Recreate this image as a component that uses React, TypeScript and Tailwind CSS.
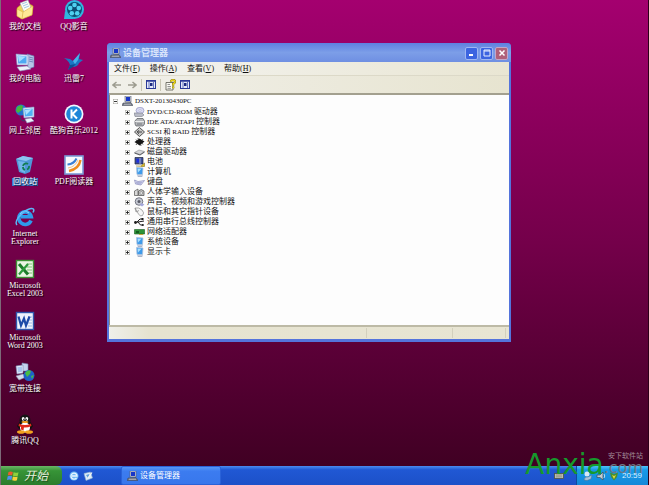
import React, { useState } from 'react';
import clsx from 'clsx';

type IconProps = { className?: string };

/* ---------- desktop icons ---------- */

const DocumentsIcon = () => (
  <svg viewBox="0 0 20 20" className="h-5 w-5">
    <path d="M2 8 L10 1 L18 6 L17 15 L7 19 L2 16 Z" fill="#f3cf5b" stroke="#b98a1c" strokeWidth=".6" />
    <path d="M5 3 L13 0 L16 8 L9 12 Z" fill="#fdfdf4" stroke="#9aa7b8" strokeWidth=".5" />
    <path d="M7 4 L12 2 M8 6 L13 4 M9 8 L14 6" stroke="#8bb9e6" strokeWidth=".8" />
    <path d="M2 9 L8 12 L18 6 L17 15 L7 19 L2 16 Z" fill="#ffe896" stroke="#d6a93a" strokeWidth=".5" />
    <path d="M8 12 L7 19" stroke="#dcb04a" strokeWidth=".7" />
  </svg>
);

const ComputerIcon = () => (
  <svg viewBox="0 0 20 20" className="h-5 w-5">
    <path d="M12 2 L19 4 V15 L13 17 Z" fill="#b7c5e8" stroke="#6377ad" strokeWidth=".6" />
    <path d="M14 5 L18 6 M14 7 L18 8 M14 9 L18 10" stroke="#5069a8" strokeWidth=".7" />
    <path d="M1 2 L13 3 V13 L2 13 Z" fill="#dfe8fa" stroke="#7a90c4" strokeWidth=".6" />
    <path d="M2.500 3.500 L11.500 4.300 V11.500 L3.200 11.600 Z" fill="#4fa9f2" />
    <path d="M3 4 L11 4.500 L4 10 Z" fill="#a6dcff" />
    <path d="M2 15 L12 14 L16 17 L5 19 Z" fill="#edf1fb" stroke="#8a9ac0" strokeWidth=".6" />
  </svg>
);

const NetworkIcon = () => (
  <svg viewBox="0 0 20 20" className="h-5 w-5">
    <circle cx="6" cy="6" r="5.500" fill="#2272cf" />
    <path d="M2 3 Q6 0 8 2 L7 6 L3 9 L1 7 Z M8 8 L11 7 L9 11 Z" fill="#46b83c" />
    <path d="M8 4 L19 3 V13 L9 14 Z" fill="#dce8fb" stroke="#7c93c8" strokeWidth=".6" />
    <path d="M9.300 5.300 L17.700 4.500 V11.700 L10 12.500 Z" fill="#4fb0f4" />
    <path d="M10 6 L17 5 L11 11 Z" fill="#aee2ff" />
    <path d="M10 15 L16 14 L19 17 L12 19 Z" fill="#edf1fb" stroke="#8a9ac0" strokeWidth=".6" />
    <path d="M5 12 Q5 17 10 17" fill="none" stroke="#33406b" strokeWidth="1" />
  </svg>
);

const RecycleIcon = () => (
  <svg viewBox="0 0 20 20" className="h-5 w-5">
    <path d="M1 4 L8 1 L18 3 L15 17 L10 19 L4 17 Z" fill="#4f97d8" />
    <path d="M1 4 L8 1 L18 3 L11 6 Z" fill="#8cc6f1" />
    <path d="M3 6 L10 7 L10 18 L5 16 Z" fill="#74b5ea" />
    <path d="M8 11 A3.200 3.200 0 0 1 13 9 M14 11 A3.200 3.200 0 0 1 12 14.500 M10 15 A3 3 0 0 1 8 12" fill="none" stroke="#127d53" strokeWidth="1.800" />
  </svg>
);

const ExplorerIcon = () => (
  <svg viewBox="0 0 20 20" className="h-5 w-5">
    <path d="M16 13.500 A6.300 6.300 0 1 1 16.300 9.800 H6" fill="none" stroke="#2f9bea" strokeWidth="3.600" />
    <path d="M5 7 A6 6 0 0 1 14 6" fill="none" stroke="#8fd4ff" strokeWidth="1" />
    <path d="M2 18 C-1 15 5 6 13 2.500 C18 .5 20 2 18 5.500" fill="none" stroke="#5cb8f7" strokeWidth="1.500" />
  </svg>
);

const ExcelIcon = () => (
  <svg viewBox="0 0 20 20" className="h-5 w-5">
    <rect x="1.500" y="1.500" width="17" height="17" fill="#e9f6e4" stroke="#3d8f35" strokeWidth="1.400" />
    <path d="M12 5 H17 M12 8 H17 M12 11 H17 M12 14 H17" stroke="#7fbf74" strokeWidth="1" />
    <path d="M4 5 L13 15.500" stroke="#1c7d2a" strokeWidth="3" />
    <path d="M13 5 L4 15.500" stroke="#2c9a3c" strokeWidth="2.200" />
  </svg>
);

const WordIcon = () => (
  <svg viewBox="0 0 20 20" className="h-5 w-5">
    <rect x="1.500" y="1.500" width="17" height="17" fill="#eef3fd" stroke="#2f57ad" strokeWidth="1.400" />
    <path d="M13 6 H17 M13 9 H17 M13 12 H17 M13 15 H17" stroke="#9db7e4" strokeWidth="1" />
    <path d="M3.500 5.500 L6 14.500 L9 7.500 L11 14.500 L14.500 5.500" fill="none" stroke="#1d4ba8" strokeWidth="2.200" />
  </svg>
);

const BroadbandIcon = () => (
  <svg viewBox="0 0 20 20" className="h-5 w-5">
    <path d="M7 1 L13 2 V9 L7 9 Z" fill="#c5d3ee" stroke="#7688b5" strokeWidth=".6" />
    <path d="M1 4 L8 3 V11 L2 12 Z" fill="#e8eefa" stroke="#7688b5" strokeWidth=".6" />
    <path d="M2.300 5.200 L7 4.500 V9.800 L3 10.500 Z" fill="#a9c6ef" />
    <path d="M1 14 L8 12 L11 15 L4 18 Z" fill="#d7deee" stroke="#8a94b5" strokeWidth=".6" />
    <circle cx="14" cy="13.500" r="5.500" fill="#1e62c8" />
    <path d="M10 11 Q13 7 16 9 L15 12 L12 15 Z M16 14 L19 13 L17 17 Z" fill="#47bd45" />
  </svg>
);

const PenguinIcon = () => (
  <svg viewBox="0 0 20 20" className="h-5 w-5">
    <path d="M2 12 Q4 8 6 7 L14 7 Q16 8 18 12 L16 15 L4 15 Z" fill="#111" />
    <ellipse cx="10" cy="6.500" rx="5.500" ry="6" fill="#151515" />
    <ellipse cx="10" cy="13.500" rx="5" ry="5" fill="#fff" />
    <ellipse cx="8.200" cy="4.800" rx="1.400" ry="1.900" fill="#fff" />
    <ellipse cx="11.800" cy="4.800" rx="1.400" ry="1.900" fill="#fff" />
    <circle cx="8.500" cy="5.200" r=".5" fill="#000" />
    <circle cx="11.500" cy="5.200" r=".5" fill="#000" />
    <ellipse cx="10" cy="8" rx="3.400" ry="1.100" fill="#f5a623" />
    <path d="M4 9.500 Q10 12.500 16 9.500 L16.500 12 Q10 15 3.500 12 Z M6 12 L9 13 L8.500 16.500 L6 15.500 Z" fill="#dd2a1b" />
    <ellipse cx="6" cy="18" rx="4" ry="1.800" fill="#f2a21f" />
    <ellipse cx="14" cy="18" rx="4" ry="1.800" fill="#f2a21f" />
  </svg>
);

const QQPlayerIcon = () => (
  <svg viewBox="0 0 20 20" className="h-5 w-5">
    <circle cx="10.500" cy="9.500" r="9.500" fill="#2fb6e0" />
    <path d="M1 11 L0 19 L10 19 Z" fill="#2fb6e0" />
    <circle cx="10.500" cy="9.500" r="7.500" fill="#0c4d74" />
    <g fill="#4fd0f0">
      <circle cx="10.500" cy="5" r="2.300" />
      <circle cx="14.800" cy="8.100" r="2.300" />
      <circle cx="13.200" cy="13.200" r="2.300" />
      <circle cx="7.800" cy="13.200" r="2.300" />
      <circle cx="6.200" cy="8.100" r="2.300" />
    </g>
  </svg>
);

const ThunderIcon = () => (
  <svg viewBox="0 0 20 20" className="h-5 w-5">
    <path d="M0 6 L6 7 L9 9 L16 1 L15 7 L19 8 L15 11 Q14 15 8 15 L4 18 L6 13 Q5 9 0 6 Z" fill="#1c76c4" />
    <path d="M9 9 L16 1 L14 8 L11 12 Z" fill="#4bb2e8" />
    <path d="M6 13 L12 12 L9 15 L4 18 Z" fill="#0f4d94" />
  </svg>
);

const KugouIcon = () => (
  <svg viewBox="0 0 20 20" className="h-5 w-5">
    <circle cx="10" cy="10" r="9.500" fill="#f2f8ff" />
    <circle cx="10" cy="10" r="7.800" fill="#1f86d8" />
    <path d="M7.500 5.500 V14.500 M13 5.500 L8.500 10 L13 14.500" fill="none" stroke="#fff" strokeWidth="2" />
  </svg>
);

const PdfIcon = () => (
  <svg viewBox="0 0 20 20" className="h-5 w-5">
    <rect x="1" y="1" width="18" height="18" fill="#f7f9fd" stroke="#7a9ad6" strokeWidth="1.600" />
    <path d="M3.500 9.500 Q10 9 12.500 3.500" fill="none" stroke="#3b7fd4" strokeWidth="2" />
    <path d="M5 16 Q15 14 16.500 5" fill="none" stroke="#ef8a1d" strokeWidth="2.400" />
    <path d="M4 13 Q11 12 14 5" fill="none" stroke="#f9c27a" strokeWidth="1" />
  </svg>
);

/* ---------- small icons ---------- */

const WorkstationIcon = ({ className }: IconProps) => (
  <svg viewBox="0 0 11 10" className={className}>
    <path d="M3 0 H9 V6 H3 Z" fill="#c9cfdb" stroke="#555c70" strokeWidth=".6" />
    <path d="M4 1 H8 V5 H4 Z" fill="#1836c8" />
    <path d="M1 7 L9 6.500 L11 9.500 H0 Z" fill="#707684" stroke="#3d4250" strokeWidth=".5" />
    <path d="M2 8.300 H9" stroke="#d6d9e0" strokeWidth=".6" />
  </svg>
);

const smallIcon = 'h-[10px] w-[11px] shrink-0';

const DiscIcon = () => (
  <svg viewBox="0 0 11 10" className={smallIcon}>
    <ellipse cx="6" cy="3.500" rx="4" ry="3.200" fill="#d8d9f2" stroke="#8688b8" strokeWidth=".6" />
    <circle cx="6" cy="3.500" r="1" fill="#fff" stroke="#8688b8" strokeWidth=".4" />
    <path d="M0 6 H8 L10 8 L8 9.500 H1 Z" fill="#b9bcc8" stroke="#6b6e7c" strokeWidth=".5" />
  </svg>
);

const DriveControllerIcon = () => (
  <svg viewBox="0 0 11 10" className={smallIcon}>
    <path d="M1 4 L3 1.500 H9 L10.500 4 V7 L9 9 H2 L1 7 Z" fill="#b4b6ba" stroke="#55575c" strokeWidth=".7" />
    <path d="M1 4.500 H10" stroke="#f2f2f2" strokeWidth=".9" />
    <path d="M3 7 H8" stroke="#66686c" strokeWidth=".8" />
  </svg>
);

const ScsiIcon = () => (
  <svg viewBox="0 0 11 10" className={smallIcon}>
    <path d="M5.500 0.500 L10.500 5 L5.500 9.500 L.5 5 Z" fill="#c7c7c7" stroke="#444" strokeWidth=".9" />
    <path d="M8 5 H3.500 M5 3.200 L3.200 5 L5 6.800" fill="none" stroke="#333" strokeWidth=".9" />
  </svg>
);

const ChipIcon = () => (
  <svg viewBox="0 0 11 10" className={smallIcon}>
    <path d="M5.500 1.500 L10.500 4.500 L5.500 8.500 L.5 5 Z" fill="#161616" />
    <path d="M2 2.500 L3 4 M4 1 L4.500 3 M9 7.500 L8 6 M7 9 L6.500 7 M2 8 L3 6.500 M9 2 L8 3.500" stroke="#333" strokeWidth=".8" />
  </svg>
);

const DiskIcon = () => (
  <svg viewBox="0 0 11 10" className={smallIcon}>
    <path d="M.5 5.500 L5 3 L10.500 4.500 L6 7.500 Z" fill="#d4d5d8" stroke="#7a7c82" strokeWidth=".5" />
    <path d="M.5 5.500 L6 7.500 L10.500 4.500 V5.500 L6 8.500 L.5 6.500 Z" fill="#55575d" />
  </svg>
);

const BatteryIcon = () => (
  <svg viewBox="0 0 11 10" className={smallIcon}>
    <path d="M1 .5 H9 V7 H1 Z" fill="#3b4f9c" stroke="#22263e" strokeWidth=".7" />
    <path d="M2.500 2 H5 V5.500 H2.500 Z" fill="#1c2ee0" />
    <path d="M6 1 V7" stroke="#b5c0e6" strokeWidth=".8" />
    <path d="M2 9 H7 L10.500 6 V9.500 H7" fill="#e0c020" stroke="#6b5c10" strokeWidth=".5" />
  </svg>
);

const MonitorIcon = () => (
  <svg viewBox="0 0 11 10" className={smallIcon}>
    <path d="M2.500 .5 L9 1 L8.500 7.500 H3 Z" fill="#3f9bea" stroke="#a9bfdc" strokeWidth=".8" />
    <path d="M3.500 1.500 L7.500 1.700 L4 5.500 Z" fill="#a9defc" />
    <path d="M3 8.500 H9 L8 9.800 H4 Z" fill="#8e9cb8" />
  </svg>
);

const KeyboardIcon = () => (
  <svg viewBox="0 0 11 10" className={smallIcon}>
    <path d="M.5 3 L4 4.500 L10.500 3.500 L7 8 L1.500 7 Z" fill="#d3d5f0" stroke="#7d80b2" strokeWidth=".6" />
    <path d="M2 5.500 L8 5.500 M2.500 6.500 L7 6.700" stroke="#8b8ec0" strokeWidth=".5" />
  </svg>
);

const HidIcon = () => (
  <svg viewBox="0 0 11 10" className={smallIcon}>
    <path d="M.5 8.500 V4 L4 2 V8.500 Z" fill="#d8d8d8" stroke="#555" strokeWidth=".7" />
    <path d="M4.500 4 Q7 1 10 4 V8.500 H4.500 Z" fill="#c3c3c3" stroke="#4a4a4a" strokeWidth=".7" />
    <circle cx="7.200" cy="6" r="1.300" fill="#fff" stroke="#555" strokeWidth=".5" />
  </svg>
);

const SpeakerIcon = () => (
  <svg viewBox="0 0 11 10" className={smallIcon}>
    <circle cx="5" cy="4.500" r="3.800" fill="#c5c8d2" stroke="#5a5d6b" strokeWidth=".8" />
    <circle cx="5" cy="4.500" r="1.500" fill="#585b68" />
    <path d="M7 6 L10.500 7.500 L8 9.500 L6 8 Z" fill="#a5a8dc" />
  </svg>
);

const MouseIcon = () => (
  <svg viewBox="0 0 11 10" className={smallIcon}>
    <path d="M1 1 Q5 0 8 3 Q11 6 8.500 8.500 Q6 10 4.500 7 Z" fill="#f6f6f6" stroke="#8a8a8a" strokeWidth=".7" />
    <path d="M1 1 L2 5 L5 3.500" fill="none" stroke="#777" strokeWidth=".6" />
  </svg>
);

const UsbIcon = () => (
  <svg viewBox="0 0 11 10" className={smallIcon}>
    <path d="M1 5.500 L10 4 M3 5 L6 2 H8 M4 5 L6.500 8 H8.500" fill="none" stroke="#1b1b1b" strokeWidth="1" />
    <circle cx="1.500" cy="5.500" r="1.400" fill="#1b1b1b" />
    <rect x="7.500" y="1" width="2" height="2" fill="#1b1b1b" />
    <circle cx="8.800" cy="8" r="1.100" fill="#1b1b1b" />
  </svg>
);

const NetCardIcon = () => (
  <svg viewBox="0 0 11 10" className={smallIcon}>
    <path d="M.5 2.500 H10.500 V7 H.5 Z" fill="#2e9438" stroke="#1b5c22" strokeWidth=".6" />
    <path d="M2 4 H5 V6 H2 Z" fill="#155c1e" />
    <path d="M5 7.500 H9" stroke="#c6a43a" strokeWidth="1" />
  </svg>
);

/* ---------- data ---------- */

const shortcuts = [
  { name: '我的文档', icon: DocumentsIcon },
  { name: '我的电脑', icon: ComputerIcon },
  { name: '网上邻居', icon: NetworkIcon },
  { name: '回收站', icon: RecycleIcon },
  { name: 'Internet Explorer', icon: ExplorerIcon },
  { name: 'Microsoft Excel 2003', icon: ExcelIcon },
  { name: 'Microsoft Word 2003', icon: WordIcon },
  { name: '宽带连接', icon: BroadbandIcon },
  { name: '腾讯QQ', icon: PenguinIcon },
  { name: 'QQ影音', icon: QQPlayerIcon },
  { name: '迅雷7', icon: ThunderIcon },
  { name: '酷狗音乐2012', icon: KugouIcon },
  { name: 'PDF阅读器', icon: PdfIcon },
];

const devices = [
  { latin: 'DVD/CD-ROM ', name: '驱动器', icon: DiscIcon },
  { latin: 'IDE ATA/ATAPI ', name: '控制器', icon: DriveControllerIcon },
  { latin: 'SCSI 和 RAID ', name: '控制器', icon: ScsiIcon },
  { name: '处理器', icon: ChipIcon },
  { name: '磁盘驱动器', icon: DiskIcon },
  { name: '电池', icon: BatteryIcon },
  { name: '计算机', icon: MonitorIcon },
  { name: '键盘', icon: KeyboardIcon },
  { name: '人体学输入设备', icon: HidIcon },
  { name: '声音、视频和游戏控制器', icon: SpeakerIcon },
  { name: '鼠标和其它指针设备', icon: MouseIcon },
  { name: '通用串行总线控制器', icon: UsbIcon },
  { name: '网络适配器', icon: NetCardIcon },
  { name: '系统设备', icon: MonitorIcon },
  { name: '显示卡', icon: MonitorIcon },
];

const menus = [
  { name: '文件', key: 'F' },
  { name: '操作', key: 'A' },
  { name: '查看', key: 'V' },
  { name: '帮助', key: 'H' },
];

/* ---------- window ---------- */

function ToggleBox({ open }: { open?: boolean }) {
  return (
    <svg viewBox="0 0 5 5" className="mr-1 h-[5px] w-[5px] shrink-0">
      <rect x=".25" y=".25" width="4.500" height="4.500" fill="#fff" stroke="#9a9a94" strokeWidth=".5" />
      <path d={open ? 'M1 2.500 H4' : 'M1 2.500 H4 M2.500 1 V4'} stroke="#222" strokeWidth=".9" />
    </svg>
  );
}

function PanelIcon() {
  return (
    <svg viewBox="0 0 10 9" className="h-[9px] w-[10px]">
      <rect x=".5" y=".5" width="9" height="8" fill="#e4e8f8" stroke="#2b3a98" strokeWidth="1" />
      <path d="M.5 1 H9.500" stroke="#2b3a98" strokeWidth="1.500" />
      <path d="M3 2 V8 M7.500 2 V8" stroke="#4455b0" strokeWidth=".8" />
      <rect x="4" y="3" width="2.500" height="3" fill="#1c2a80" />
    </svg>
  );
}

function DeviceManager() {
  const [expanded, setExpanded] = useState(true);

  return (
    <section
      aria-label="设备管理器"
      className="absolute top-[43px] right-[137px] bottom-[124px] left-[106px] flex flex-col rounded-t-[4px] bg-[#5474dc] px-[2px] pb-[3px]"
    >
      <header className="-mx-[2px] flex h-[19px] shrink-0 items-center rounded-t-[4px] bg-linear-to-b from-[#5f80e0] via-[#7c9ee8] to-[#6f8fe2] px-[3px] pt-px">
        <WorkstationIcon className="h-[10px] w-[11px]" />
        <h1 className="ml-[2px] flex-1 text-[9px] leading-none font-bold text-[#d9e4fb]">设备管理器</h1>
        <div className="flex gap-[2px]">
          <button aria-label="最小化" className="flex h-[13px] w-[13px] items-center justify-center rounded-[2px] border border-[#9fb6f2] bg-[#3c64e0]">
            <svg viewBox="0 0 8 8" className="h-2 w-2"><path d="M1 6 H5" stroke="#fff" strokeWidth="2" /></svg>
          </button>
          <button aria-label="最大化" className="flex h-[13px] w-[13px] items-center justify-center rounded-[2px] border border-[#9fb6f2] bg-[#3c64e0]">
            <svg viewBox="0 0 8 8" className="h-2 w-2"><path d="M1 1 H7 V7 H1 Z M1 2 H7" fill="none" stroke="#e8eeff" strokeWidth="1" /></svg>
          </button>
          <button aria-label="关闭" className="flex h-[13px] w-[13px] items-center justify-center rounded-[2px] border border-[#c3a6c8] bg-[#b0607a]">
            <svg viewBox="0 0 8 8" className="h-2 w-2"><path d="M1.500 1.500 L6.500 6.500 M6.500 1.500 L1.500 6.500" stroke="#fff" strokeWidth="1.500" /></svg>
          </button>
        </div>
      </header>

      <nav className="flex h-[14px] shrink-0 items-center gap-[10px] border-b border-[#dcd9c8] bg-linear-to-r from-[#f4f4f2] to-[#e9e6d3] px-[5px]">
        {menus.map(menu => (
          <button key={menu.key} className="text-[8px] leading-none whitespace-nowrap text-[#111]">
            {menu.name}(<u>{menu.key}</u>)
          </button>
        ))}
      </nav>

      <div className="flex h-[19px] shrink-0 items-center border-b-2 border-[#a3a08f] bg-linear-to-r from-[#f1f0ea] to-[#e7e4d0] px-[3px]">
        <button aria-label="后退" className="mr-[5px]">
          <svg viewBox="0 0 10 8" className="h-2 w-[10px]"><path d="M4.500 1 L1 4 L4.500 7 M1 4 H9" fill="none" stroke="#9d9c90" strokeWidth="1.500" /></svg>
        </button>
        <button aria-label="前进">
          <svg viewBox="0 0 10 8" className="h-2 w-[10px]"><path d="M5.500 1 L9 4 L5.500 7 M9 4 H1" fill="none" stroke="#9d9c90" strokeWidth="1.500" /></svg>
        </button>
        <span className="mx-1 h-3 w-px bg-[#c9c6b4]" />
        <button aria-label="显示控制台树"><PanelIcon /></button>
        <span className="mx-1 h-3 w-px bg-[#c9c6b4]" />
        <button aria-label="帮助" className="mr-1">
          <svg viewBox="0 0 11 12" className="h-3 w-[11px]">
            <path d="M1 3.500 H8 V11 H1 Z" fill="#fbfbf4" stroke="#55554c" strokeWidth=".8" />
            <path d="M2.500 5.500 H5 M2.500 7.500 H6 M2.500 9.300 H6" stroke="#777" strokeWidth=".8" />
            <path d="M6 2.800 Q6 1 8 1 Q10.200 1 10 3 Q9.800 4.200 8.200 4.800 V6.500 M8.200 7.600 V9.200" fill="none" stroke="#6d6410" strokeWidth="2.200" />
            <path d="M6 2.800 Q6 1 8 1 Q10.200 1 10 3 Q9.800 4.200 8.200 4.800 V6.500 M8.200 7.600 V9.200" fill="none" stroke="#f4dc1c" strokeWidth="1.400" />
          </svg>
        </button>
        <button aria-label="属性"><PanelIcon /></button>
      </div>

      <div className="min-h-0 flex-1 overflow-hidden border-l border-[#8f8c80] bg-[#fdfdfd] pl-[3px] text-[8px] text-[#111]">
        <button onClick={() => setExpanded(!expanded)} className="flex h-3 items-center leading-none">
          <ToggleBox open={expanded} />
          <WorkstationIcon className="mr-[2px] h-[10px] w-[11px]" />
          <span className="text-[7px]">DSXT-20130430PC</span>
        </button>
        {expanded && (
          <ul className="pl-3">
            {devices.map(({ latin, name, icon: Icon }) => (
              <li key={(latin ?? '') + name} className="flex h-[10px] items-center leading-none whitespace-pre">
                <ToggleBox />
                <Icon />
                <span className="ml-[2px]">
                  {latin && <span className="text-[7px]">{latin}</span>}
                  {name}
                </span>
              </li>
            ))}
          </ul>
        )}
      </div>

      <footer className="flex h-[14px] shrink-0 border-t-2 border-[#bdbaa6] bg-linear-to-r from-[#efefea] via-[#e6e3d0] via-10% to-[#e8e5d3] py-px">
        <span className="flex-[3] border-r border-[#d3d0bd]" />
        <span className="flex-1 border-r border-[#d3d0bd]" />
        <span className="mr-[3px] w-[53px] border-r border-[#d3d0bd]" />
      </footer>
    </section>
  );
}

/* ---------- taskbar ---------- */

function Taskbar() {
  return (
    <footer className="flex h-[19px] shrink-0 items-stretch bg-linear-to-b from-[#4a8cf0] via-[#2058d4] via-20% to-[#1c50c8]">
      <button className="flex w-[61px] items-center rounded-r-[6px] bg-linear-to-b from-[#6ab665] via-[#379437] via-25% to-[#2b7d2c] pl-[6px]">
        <svg viewBox="0 0 12 12" className="h-3 w-3">
          <path d="M1.500 2 Q3.500 .8 5.800 2 L5.200 5.600 Q3 4.500 .8 5.600 Z" fill="#ee5a2c" />
          <path d="M6.500 2.300 Q9 3.300 11.500 2.200 L10.800 5.800 Q8.500 6.800 6 5.800 Z" fill="#8fd03c" />
          <path d="M.7 6.300 Q3 5.300 5.100 6.300 L4.500 10 Q2.200 9 0 10 Z" fill="#4f8ff0" />
          <path d="M5.800 6.600 Q8 7.600 10.600 6.500 L10 10.200 Q7.500 11.300 5.200 10.300 Z" fill="#f7d03a" />
        </svg>
        <span className="ml-[5px] text-[12px] leading-none text-[#e6f0dc] italic [text-shadow:1px_1px_1px_#1d4d1d]">开始</span>
      </button>

      <div className="ml-[7px] flex items-center gap-1">
        <button aria-label="Internet Explorer">
          <svg viewBox="0 0 10 10" className="h-[10px] w-[10px]">
            <circle cx="5" cy="5" r="4.500" fill="#6cb8f4" />
            <path d="M7.500 6.800 A3 3 0 1 1 8 5 H3" fill="none" stroke="#e8f6ff" strokeWidth="1.300" />
          </svg>
        </button>
        <button aria-label="显示桌面">
          <svg viewBox="0 0 10 10" className="h-[10px] w-[10px]">
            <path d="M1 2.500 L7.500 1 L9.500 7 L3 9.500 Z" fill="#dcecf8" stroke="#8fb0cc" strokeWidth=".6" />
            <path d="M3 4 L6.500 3 L5 7 Z" fill="#5fa0d8" />
            <path d="M5 7 L9 1.500" stroke="#f4f4f4" strokeWidth="1.200" />
          </svg>
        </button>
      </div>

      <button className="ml-7 flex w-[100px] items-center rounded-[2px] border border-[#2a62d8] bg-linear-to-b from-[#5596f6] via-[#3c7cf0] via-25% to-[#3877ec] pl-[5px]">
        <WorkstationIcon className="h-[10px] w-[11px]" />
        <span className="ml-[2px] text-[8px] leading-none text-white">设备管理器</span>
      </button>

      <div className="ml-auto flex items-center pr-3">
        <svg viewBox="0 0 10 6" className="h-[6px] w-[10px]">
          <rect x=".5" y=".5" width="9" height="5" fill="#b9bcae" stroke="#4d5246" strokeWidth=".8" />
          <path d="M2 2 H8 M2 3.800 H8" stroke="#8a8e7e" strokeWidth=".8" />
        </svg>
      </div>
      <div className="flex items-center gap-[3px] border-l border-[#0f4a9c] bg-linear-to-b from-[#4cc4f8] via-[#179ae8] via-20% to-[#1488d8] px-[6px]">
        <svg viewBox="0 0 10 10" className="h-[10px] w-[10px]">
          <circle cx="4" cy="3" r="2.500" fill="#d8e8f4" />
          <path d="M1 9 Q2 5 5 6 L9 4 L8 8 L4 9.500 Z" fill="#a8c4dc" stroke="#4c6a88" strokeWidth=".5" />
        </svg>
        <svg viewBox="0 0 10 10" className="h-[10px] w-[10px]">
          <path d="M1 4 H4 L7 1 V9 L4 6.500 H1 Z" fill="#c4ccd2" stroke="#3d4c58" strokeWidth=".7" />
          <path d="M8 3 Q9.500 5 8 7" fill="none" stroke="#e8eef2" strokeWidth=".8" />
        </svg>
        <svg viewBox="0 0 10 10" className="h-[10px] w-[10px]">
          <path d="M1 1.500 L5 3 L9 1.500 L8 6 L5 9.500 L2 6 Z" fill="#4a8f30" />
          <path d="M3 4 L5 5 L7 4 L5 8 Z" fill="#e6d83c" />
        </svg>
        <time className="font-['Liberation_Sans'] text-[8px] leading-none text-[#dcefff]">20:59</time>
      </div>
    </footer>
  );
}

export default function App() {
  const [selected, setSelected] = useState('回收站');

  return (
    <div className="flex h-screen flex-col overflow-hidden border-x border-r-[#2c0018] border-l-[#7d6a78] bg-linear-to-b from-[#a4006f] via-[#74004a] to-[#3c0020] font-['Liberation_Serif','Noto_Sans_CJK_SC',serif]">
      <main className="relative min-h-0 flex-1">
        <div className="grid h-full w-[100px] grid-flow-col grid-cols-[48px_50px] grid-rows-9">
          {shortcuts.map(({ name, icon: Icon }) => (
            <button key={name} onClick={() => setSelected(name)} className="flex min-h-0 flex-col items-center gap-[3px]">
              <Icon />
              <span
                className={clsx(
                  'px-px text-center text-[8px] leading-[8px] text-white [text-shadow:1px_1px_1px_#000]',
                  /\s/.test(name) ? 'w-[42px]' : 'whitespace-nowrap',
                  selected === name && 'bg-[#3c78d4]',
                )}
              >
                {name}
              </span>
            </button>
          ))}
        </div>
        <DeviceManager />
      </main>
      <Taskbar />

      <div className="pointer-events-none absolute right-[6px] bottom-[6px] flex items-end leading-none">
        <span className="font-['DejaVu_Sans'] text-[28px] leading-[28px] text-[#169a2c]">Anxia</span>
        <div className="flex flex-col items-end pb-[3px]">
          <span className="text-[7px] text-[#a08a98]">安下软件站</span>
          <span className="font-['DejaVu_Sans'] text-[16px] leading-4 text-[#6f7682]">.com</span>
        </div>
      </div>
    </div>
  );
}
